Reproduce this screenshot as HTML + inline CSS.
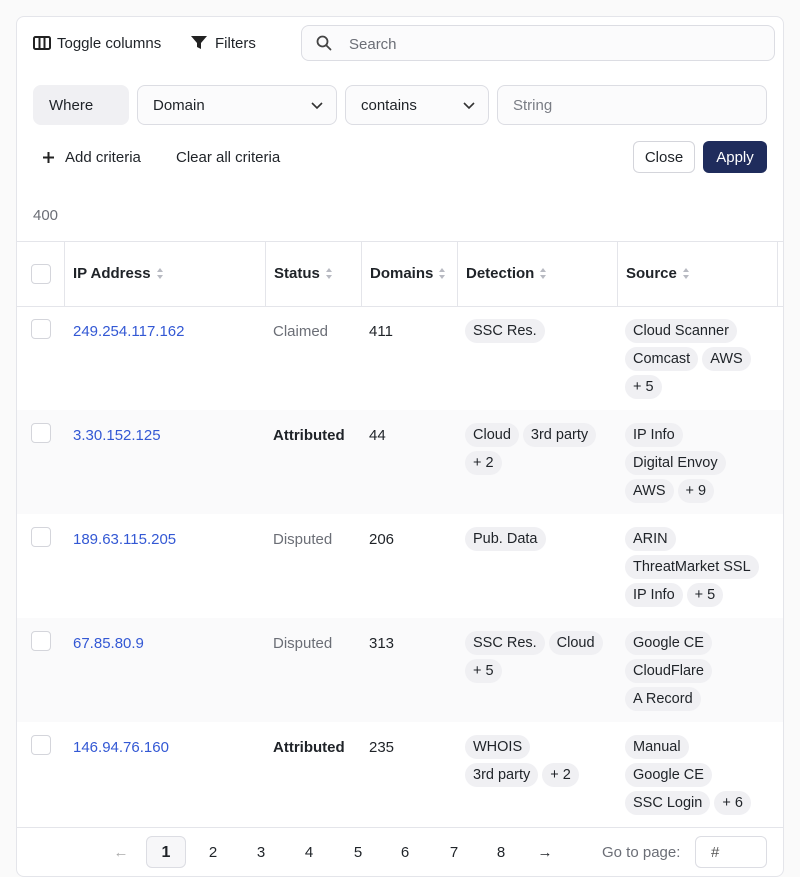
<!DOCTYPE html>
<html><head><style>
*{box-sizing:border-box;margin:0;padding:0}
body{width:800px;height:877px;background:#fafafa;font-family:"Liberation Sans",sans-serif;font-size:15px;color:#1f2328;position:relative;overflow:hidden}
.card{position:absolute;left:16px;top:16px;width:768px;height:861px;background:#fff;border:1px solid #e4e5ea;border-radius:8px;overflow:hidden}
.a{position:absolute}
.t{position:absolute;margin-top:1px}
.box{position:absolute;border:1px solid #dcdde3;border-radius:8px;background:#fbfbfc;height:40px;display:flex;align-items:center;padding-left:15px}
.chev{position:absolute;right:12px;top:12px}
.cb{position:absolute;width:20px;height:20px;border:1px solid #d4d5db;border-radius:4px;background:#fff}
.th{position:absolute;top:265px;font-weight:bold;font-size:15px;display:flex;align-items:center;gap:6px}
.sort{display:inline-block;width:7px;height:11px;position:relative}
.sort:before,.sort:after{content:"";position:absolute;left:0;border-left:3.5px solid transparent;border-right:3.5px solid transparent}
.sort:before{top:0;border-bottom:4px solid #b8bac2}
.sort:after{bottom:0;border-top:4px solid #b8bac2}
.vl{position:absolute;top:242px;height:64px;width:1px;background:#e4e5ea}
.row{position:absolute;left:17px;width:766px;height:104px}
.ip{position:absolute;color:#3358d4;font-size:15px;margin-top:1px}
.chips{position:absolute;display:flex;flex-wrap:wrap;gap:4px}
.chip{height:24px;line-height:25px;padding:0 8px;background:#f0f0f3;border-radius:12px;font-size:14.5px;white-space:nowrap}
.pg{position:absolute;top:836px;height:32px;width:40px;text-align:center;line-height:33px;font-size:15px}
</style></head><body>
<div class="card"></div>
<!-- toolbar -->
<svg class="a" style="left:33px;top:36px" width="18" height="14" viewBox="0 0 18 14"><rect x="1" y="1" width="16" height="12" rx="1.5" fill="none" stroke="#222" stroke-width="2"/><line x1="6.5" y1="1" x2="6.5" y2="13" stroke="#222" stroke-width="2"/><line x1="11.5" y1="1" x2="11.5" y2="13" stroke="#222" stroke-width="2"/></svg>
<div class="t" style="left:57px;top:34px">Toggle columns</div>
<svg class="a" style="left:191px;top:36px" width="16" height="14" viewBox="0 0 16 14"><path d="M0 0H16L10 7V13L6 11V7Z" fill="#222"/></svg>
<div class="t" style="left:215px;top:34px">Filters</div>
<div class="box" style="left:301px;top:25px;width:474px;height:36px;padding-left:47px;color:#6b6e76;padding-top:2px">Search</div>
<svg class="a" style="left:316px;top:35px" width="16" height="16" viewBox="0 0 16 16"><circle cx="6.5" cy="6.5" r="5" fill="none" stroke="#444" stroke-width="1.8"/><line x1="10.2" y1="10.2" x2="14.5" y2="14.5" stroke="#444" stroke-width="1.8" stroke-linecap="round"/></svg>
<div class="box" style="left:33px;top:85px;width:96px;background:#f0f0f3;border-color:#f0f0f3;padding-top:1px">Where</div>
<div class="box" style="left:137px;top:85px;width:200px;padding-top:1px">Domain<svg class="chev" width="14" height="14" viewBox="0 0 14 14"><path d="M2 5L7 10L12 5" fill="none" stroke="#333" stroke-width="1.6"/></svg></div>
<div class="box" style="left:345px;top:85px;width:144px;padding-top:1px">contains<svg class="chev" width="14" height="14" viewBox="0 0 14 14"><path d="M2 5L7 10L12 5" fill="none" stroke="#333" stroke-width="1.6"/></svg></div>
<div class="box" style="left:497px;top:85px;width:270px;color:#7a7d85;padding-top:1px">String</div>
<svg class="a" style="left:42px;top:151px" width="13" height="13" viewBox="0 0 13 13"><path d="M6.5 1V12M1 6.5H12" stroke="#222" stroke-width="2"/></svg>
<div class="t" style="left:65px;top:148px">Add criteria</div>
<div class="t" style="left:176px;top:148px">Clear all criteria</div>
<div class="a" style="left:633px;top:141px;width:62px;height:32px;border:1px solid #d4d5db;border-radius:6px;text-align:center;line-height:32px">Close</div>
<div class="a" style="left:703px;top:141px;width:64px;height:32px;background:#1f2c5c;color:#fff;border-radius:6px;text-align:center;line-height:34px">Apply</div>
<div class="t" style="left:33px;top:206px;color:#6b6e76">400</div>
<!-- header -->
<div class="a" style="left:17px;top:241px;width:766px;height:1px;background:#e4e5ea"></div>
<div class="a" style="left:17px;top:306px;width:766px;height:1px;background:#e4e5ea"></div>
<div class="vl" style="left:64px"></div><div class="vl" style="left:265px"></div><div class="vl" style="left:361px"></div><div class="vl" style="left:457px"></div><div class="vl" style="left:617px"></div><div class="vl" style="left:777px"></div>
<div class="cb" style="left:31px;top:264px"></div>
<div class="th" style="left:73px">IP Address <span class="sort"></span></div>
<div class="th" style="left:274px">Status <span class="sort"></span></div>
<div class="th" style="left:370px">Domains <span class="sort"></span></div>
<div class="th" style="left:466px">Detection <span class="sort"></span></div>
<div class="th" style="left:626px">Source <span class="sort"></span></div>
<!-- rows -->
<div class="row" style="top:410px;background:#fafafb"></div>
<div class="row" style="top:618px;background:#fafafb"></div>

<div class="cb" style="left:31px;top:319px"></div>
<div class="ip" style="left:73px;top:322px">249.254.117.162</div>
<div class="t" style="left:273px;top:322px;color:#6b6e76">Claimed</div>
<div class="t" style="left:369px;top:322px">411</div>
<div class="chips" style="left:465px;top:319px;width:145px"><span class="chip">SSC Res.</span></div>
<div class="chips" style="left:625px;top:319px;width:145px"><span class="chip">Cloud Scanner</span><span class="chip">Comcast</span><span class="chip">AWS</span><span class="chip">+ 5</span></div>

<div class="cb" style="left:31px;top:423px"></div>
<div class="ip" style="left:73px;top:426px">3.30.152.125</div>
<div class="t" style="left:273px;top:426px;font-weight:bold">Attributed</div>
<div class="t" style="left:369px;top:426px">44</div>
<div class="chips" style="left:465px;top:423px;width:145px"><span class="chip">Cloud</span><span class="chip">3rd party</span><span class="chip">+ 2</span></div>
<div class="chips" style="left:625px;top:423px;width:145px"><span class="chip">IP Info</span><span class="chip">Digital Envoy</span><span class="chip">AWS</span><span class="chip">+ 9</span></div>

<div class="cb" style="left:31px;top:527px"></div>
<div class="ip" style="left:73px;top:530px">189.63.115.205</div>
<div class="t" style="left:273px;top:530px;color:#6b6e76">Disputed</div>
<div class="t" style="left:369px;top:530px">206</div>
<div class="chips" style="left:465px;top:527px;width:145px"><span class="chip">Pub. Data</span></div>
<div class="chips" style="left:625px;top:527px;width:145px"><span class="chip">ARIN</span><span class="chip">ThreatMarket SSL</span><span class="chip">IP Info</span><span class="chip">+ 5</span></div>

<div class="cb" style="left:31px;top:631px"></div>
<div class="ip" style="left:73px;top:634px">67.85.80.9</div>
<div class="t" style="left:273px;top:634px;color:#6b6e76">Disputed</div>
<div class="t" style="left:369px;top:634px">313</div>
<div class="chips" style="left:465px;top:631px;width:145px"><span class="chip">SSC Res.</span><span class="chip">Cloud</span><span class="chip">+ 5</span></div>
<div class="chips" style="left:625px;top:631px;width:145px"><span class="chip">Google CE</span><span class="chip">CloudFlare</span><span class="chip">A Record</span></div>

<div class="cb" style="left:31px;top:735px"></div>
<div class="ip" style="left:73px;top:738px">146.94.76.160</div>
<div class="t" style="left:273px;top:738px;font-weight:bold">Attributed</div>
<div class="t" style="left:369px;top:738px">235</div>
<div class="chips" style="left:465px;top:735px;width:125px"><span class="chip">WHOIS</span><span class="chip">3rd party</span><span class="chip">+ 2</span></div>
<div class="chips" style="left:625px;top:735px;width:145px"><span class="chip">Manual</span><span class="chip">Google CE</span><span class="chip">SSC Login</span><span class="chip">+ 6</span></div>
<!-- footer -->
<div class="a" style="left:17px;top:827px;width:766px;height:1px;background:#e4e5ea"></div>
<div class="pg" style="left:101px;color:#aaa">←</div>
<div class="pg" style="left:146px;border:1px solid #dcdde3;border-radius:6px;background:#f7f7f9;font-weight:bold;line-height:31px;font-size:16px">1</div>
<div class="pg" style="left:193px">2</div><div class="pg" style="left:241px">3</div><div class="pg" style="left:289px">4</div><div class="pg" style="left:338px">5</div><div class="pg" style="left:385px">6</div><div class="pg" style="left:434px">7</div><div class="pg" style="left:481px">8</div>
<div class="pg" style="left:525px">→</div>
<div class="t" style="left:602px;top:843px;color:#6b6e76">Go to page:</div>
<div class="a" style="left:695px;top:836px;width:72px;height:32px;border:1px solid #dcdde3;border-radius:6px;padding-left:15px;line-height:32px;color:#555">#</div>
</body></html>
